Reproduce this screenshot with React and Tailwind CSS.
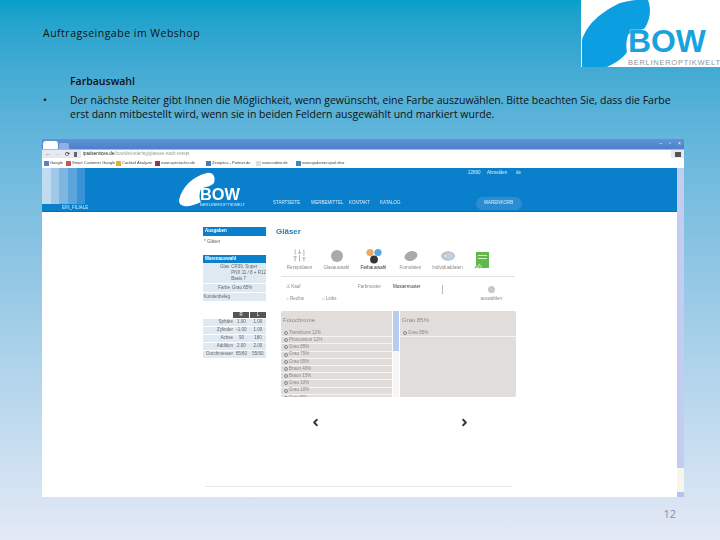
import { ChevronLeft, ChevronRight, SlidersVertical } from 'lucide-react';

const tabsTop = ['Rezeptdaten', 'Glasauswahl', 'Farbauswahl', 'Formdaten', 'Individualdaten'];
const bookmarks = [
  { label: 'Google', width: 'w-[22px]', color: 'bg-[#5a7fd0]' },
  { label: 'Smart Customer Google', width: 'w-[50px]', color: 'bg-[#c9555a]' },
  { label: 'Cocktail Analyzer', width: 'w-[39px]', color: 'bg-[#e0b030]' },
  { label: 'www.spectacles.de', width: 'w-[51px]', color: 'bg-[#8a3a5a]' },
  { label: 'Zeropticx - Partner.de', width: 'w-[50px]', color: 'bg-[#4a7ab0]' },
  { label: 'www.iodine.de', width: 'w-[40px]', color: 'bg-[#dddddd]' },
  { label: 'www.gadamer.opal.shor', width: 'w-[60px]', color: 'bg-[#3a8ac0]' },
];
const leftList = ['Transitions 12%', 'Photovision 12%', 'Grau 85%', 'Grau 75%', 'Grau 65%', 'Braun 40%', 'Braun 15%', 'Grau 10%', 'Grau 10%', 'Grau 5%'];
const lensRows = [
  ['Sphäre', '1.00', '1.00'],
  ['Zylinder', '-1.00', '1.00'],
  ['Achse', '90', '180'],
  ['Addition', '2.00', '2.00'],
  ['Durchmesser', '65/60', '55/60'],
];

function Logo() {
  return (
    <div className="w-[139px] h-[67px] bg-white shrink-0">
      <svg width="139" height="67" viewBox="0 0 139 67">
        <path d="M1 67L1 40C5 28 14 15 39 3C50 0 60-1 67 0C70 8 70 18 64 28C58 32 50 31 47 35C45 42 45 48 46 52C42 58 36 62 26 67Z" fill="#0b9fe2" />
        <text x="47" y="52" fontFamily="Liberation Sans" fontWeight="700" fontSize="31" fill="#1aa2df" stroke="#ffffff" strokeWidth="0.6" paintOrder="stroke" textLength="78" lengthAdjust="spacingAndGlyphs">BOW</text>
        <text x="47" y="65" fontFamily="Liberation Sans" fontSize="7.5" fill="#8f9498" textLength="92" lengthAdjust="spacing">BERLINEROPTIKWELT</text>
      </svg>
    </div>
  );
}

function ScreenLogo() {
  return (
    <svg width="67" height="36" viewBox="0 0 67 36" className="shrink-0">
      <path d="M0 28C3 15 14 4 28 1C34 0 37 5 35 11C32 15 24 15 22 17C20 22 20 27 22 30C16 33 9 35 5 34C1 33 0 31 0 28Z" fill="#ffffff" />
      <text x="21" y="28" fontFamily="Liberation Sans" fontWeight="700" fontSize="16" fill="#ffffff" textLength="40" lengthAdjust="spacingAndGlyphs">BOW</text>
      <text x="21" y="34" fontFamily="Liberation Sans" fontSize="4" fill="#d8ecf8" textLength="45" lengthAdjust="spacingAndGlyphs">BERLINEROPTIKWELT</text>
    </svg>
  );
}

function BrowserChrome() {
  return (
    <div className="shrink-0">
      <div className="h-[10px] bg-linear-to-b from-[#5f94d8] to-[#4f7fcb] flex items-end pl-[1px] pr-[3px]">
        <div className="w-[15px] h-[8px] bg-white rounded-t-[3px]" />
        <div className="w-[10px] h-[6px] bg-[#8fb0e2] rounded-t-[2px] ml-[1px]" />
        <div className="ml-auto flex gap-[7px] self-start pt-[2px] text-[5px] leading-[5px] text-white">
          <span>–</span>
          <span>▫</span>
          <span>×</span>
        </div>
      </div>
      <div className="h-[9px] bg-[#e6e9f2] border-t border-[#aeb8cf] flex items-center px-[3px] gap-[4px] text-[#555]">
        <span className="text-[6px] leading-none font-bold">←</span>
        <span className="text-[6px] leading-none text-[#aaa]">→</span>
        <span className="text-[6px] leading-none font-bold">⟳</span>
        <span className="w-[3px] h-[5px] bg-[#666]" />
        <div className="flex-1 h-[8px] bg-white flex items-center px-[2px] text-[4.5px] leading-none whitespace-nowrap">
          <span className="text-[#222]">ipadservices.de</span>
          <span className="text-[#999]">/bow/de/ordering/glasses-nach-rezept</span>
        </div>
        <span className="w-[6px] h-[5px] bg-[#555]" />
      </div>
      <div className="h-[10px] bg-white flex items-center pl-[2px] text-[4px] leading-none text-[#444] whitespace-nowrap overflow-hidden">
        {bookmarks.map((b) => (
          <div key={b.label} className={`flex items-center gap-[1px] ${b.width}`}>
            <span className={`w-[5px] h-[5px] ${b.color}`} />
            <span>{b.label}</span>
          </div>
        ))}
      </div>
    </div>
  );
}

function SiteHeader() {
  return (
    <div className="h-[44px] bg-[#0a80cc] flex border-b border-[#0a6fae] text-[#d8ecf8] text-[4.5px] leading-none whitespace-nowrap">
      <div className="w-[137px] flex flex-col shrink-0">
        <div className="h-[36px] flex">
          <div className="w-[9px] bg-[#c1dcf0]" />
          <div className="w-[8px] bg-[#9fc9e9]" />
          <div className="w-[9px] bg-[#7db6e1]" />
          <div className="w-[9px] bg-[#5ca4dc]" />
          <div className="w-[8px] bg-[#3a93d6]" />
        </div>
        <div className="pl-[20px] pt-[2px]">EIN_FILIALE</div>
      </div>
      <div className="pt-[4px] shrink-0">
        <ScreenLogo />
      </div>
      <div className="flex-1 flex flex-col pl-[27px]">
        <div className="flex pt-[3px] pl-[195px]">
          <span className="w-[19px]">22890</span>
          <span className="w-[29px]">Abmelden</span>
          <span>de</span>
        </div>
        <div className="flex items-center mt-[21px]">
          <span className="w-[38px]">STARTSEITE</span>
          <span className="w-[38px]">WERBEMITTEL</span>
          <span className="w-[31px]">KONTAKT</span>
          <span>KATALOG</span>
          <span className="ml-[75px] w-[46px] h-[13px] rounded-full bg-[#2a8cd2] flex items-center justify-center">WARENKORB</span>
        </div>
      </div>
    </div>
  );
}

function Sidebar() {
  return (
    <div className="w-[63px] shrink-0 text-[4.5px] leading-none text-[#666] pt-[15px]">
      <div className="h-[9px] bg-[#0a80cc] text-white font-bold flex items-center pl-[2px]">Ausgaben</div>
      <div className="mt-[4px] pl-[1px] h-[6px]">* Gläser</div>
      <div className="mt-[9px] h-[8px] bg-[#0a80cc] text-white font-bold flex items-center pl-[2px]">Warenauswahl</div>
      <div className="flex flex-col gap-[1px] bg-white">
        <div className="flex bg-[#dfe9f2] whitespace-nowrap">
          <span className="w-[27px] text-right pt-[2px]">Glas</span>
          <span className="pl-[2px] py-[1px] leading-[6px]">CR39, Super<br />PNX 11 / 8 + R12<br />Basis 7</span>
        </div>
        <div className="flex bg-[#dfe9f2] h-[8px] items-center">
          <span className="w-[27px] text-right">Farbe</span>
          <span className="pl-[2px]">Grau 85%</span>
        </div>
        <div className="flex bg-[#dfe9f2] h-[8px] items-center">
          <span className="w-[27px] text-right">Kundenbeleg</span>
        </div>
      </div>
      <div className="flex mt-[11px] gap-[1px] pl-[30px]">
        <span className="w-[16px] h-[6px] bg-[#555] text-white flex items-center justify-center">R</span>
        <span className="w-[16px] h-[6px] bg-[#555] text-white flex items-center justify-center">L</span>
      </div>
      <div className="flex flex-col gap-[1px] mt-[1px]">
        {lensRows.map((r) => (
          <div key={r[0]} className="flex bg-[#dfe9f2] h-[7px] items-center">
            <span className="w-[30px] text-right">{r[0]}</span>
            <span className="w-[17px] text-center">{r[1]}</span>
            <span className="w-[16px] text-center">{r[2]}</span>
          </div>
        ))}
      </div>
    </div>
  );
}

function TabIcon({ index }) {
  if (index === 0) return <SlidersVertical size={15} strokeWidth={1} color="#888888" />;
  if (index === 1) return <div className="w-[12px] h-[12px] rounded-full bg-[#a9a9a9]" />;
  if (index === 2) {
    return (
      <svg width="18" height="16" viewBox="0 0 18 16">
        <circle cx="5" cy="4.5" r="3.6" fill="#eda95c" />
        <circle cx="13" cy="4.5" r="3.6" fill="#55a8e2" />
        <circle cx="9" cy="11.5" r="3.9" fill="#333333" />
      </svg>
    );
  }
  if (index === 3) {
    return (
      <svg width="14" height="12" viewBox="0 0 14 12">
        <ellipse cx="7" cy="6" rx="6.6" ry="4.8" transform="rotate(-20 7 6)" fill="#a9a9a9" />
      </svg>
    );
  }
  return (
    <svg width="14" height="10" viewBox="0 0 14 10">
      <ellipse cx="7" cy="5" rx="6.5" ry="4.2" fill="#c5d2de" stroke="#9aa5b0" strokeWidth="0.7" />
      <circle cx="5" cy="5" r="2" fill="#d9e4ec" stroke="#9aa5b0" strokeWidth="0.5" />
    </svg>
  );
}

function OrderIcon() {
  return (
    <svg width="15" height="18" viewBox="0 0 15 18" className="mt-[5px] ml-[8px] shrink-0">
      <rect x="2" y="0" width="13" height="16" fill="#62b84a" />
      <rect x="4" y="3" width="9" height="1" fill="#d5ecc9" />
      <rect x="4" y="6" width="9" height="1" fill="#d5ecc9" />
      <path d="M0 17L1 14L5 14L5 12L8 14.5L5 17L5 16L2 16Z" fill="#7ec964" stroke="#ffffff" strokeWidth="0.4" />
    </svg>
  );
}

function MainPanel() {
  return (
    <div className="w-[245px] shrink-0 ml-[10px] pt-[15px] text-[4.5px] leading-none text-[#888]">
      <div className="text-[8px] leading-[10px] font-bold text-[#2b7fb0]">Gläser</div>
      <div className="flex mt-[10px] ml-[5px] h-[30px] border-b border-[#e2e2e2] w-[234px]">
        {tabsTop.map((t, i) => (
          <div key={t} className={`flex flex-col items-center w-[37px] ${i === 2 ? 'text-[#333]' : ''}`}>
            <div className="h-[17px] flex items-center justify-center">
              <TabIcon index={i} />
            </div>
            <span className="mt-[2px] whitespace-nowrap">{t}</span>
          </div>
        ))}
        <OrderIcon />
      </div>
      <div className="flex ml-[5px] pl-[5px] pt-[8px] h-[32px]">
        <div className="w-[72px]">
          <div>☉ Kauf</div>
          <div className="flex mt-[7px]">
            <span className="w-[36px]">○ Rechts</span>
            <span>○ Links</span>
          </div>
        </div>
        <div className="flex h-[10px]">
          <span className="w-[35px]">Farbmuster</span>
          <span className="text-[#333]">Mustermuster</span>
          <span className="ml-[21px] w-px h-[9px] bg-[#bbb]" />
        </div>
        <div className="ml-[38px] flex flex-col items-center pt-[1px]">
          <span className="w-[7px] h-[7px] rounded-full bg-[#c6c8ca]" />
          <span className="mt-[4px]">auswählen</span>
        </div>
      </div>
      <div className="flex ml-[5px] mt-[2px] h-[86px] text-[#8a8a8a]">
        <div className="w-[111px] bg-[#e0dddb] rounded-l-[2px] overflow-hidden">
          <div className="text-[6px] leading-none pl-[2px] pt-[6px] pb-[7px]">Fotochrome</div>
          {leftList.map((l) => (
            <div key={l} className="h-[7.2px] border-b border-[#f5f4f2] pl-[3px] flex items-center gap-[1px] whitespace-nowrap">
              <span className="w-[4px] h-[4px] rounded-full border-[0.5px] border-[#888] shrink-0" />
              {l}
            </div>
          ))}
        </div>
        <div className="w-[6px] mx-px bg-[#f6f6f6] flex flex-col">
          <div className="h-[40px] bg-[#b6cdf0]" />
        </div>
        <div className="w-[116px] bg-[#e0dddb] rounded-r-[2px]">
          <div className="text-[6px] leading-none pl-[2px] pt-[6px] pb-[7px]">Grau 85%</div>
          <div className="h-[7.2px] border-b border-[#f5f4f2] pl-[3px] flex items-center gap-[1px]">
            <span className="w-[4px] h-[4px] rounded-full border-[0.5px] border-[#888]" />
            Grau 85%
          </div>
        </div>
      </div>
      <div className="flex ml-[34px] mt-[20px] w-[160px] justify-between text-[#333]">
        <ChevronLeft size={11} strokeWidth={4} />
        <ChevronRight size={11} strokeWidth={4} />
      </div>
    </div>
  );
}

function Screenshot() {
  return (
    <div className="ml-[42px] mt-[20px] w-[642px] h-[358px] flex flex-col bg-white shrink-0 blur-[0.4px] font-['Liberation_Sans',sans-serif]">
      <BrowserChrome />
      <div className="flex flex-1 min-h-0">
        <div className="flex-1 flex flex-col min-w-0">
          <SiteHeader />
          <div className="flex-1 pl-[161px] flex min-h-0">
            <Sidebar />
            <MainPanel />
          </div>
          <div className="ml-[163px] w-[307px] h-[11px] border-t border-[#e8e8e8]" />
        </div>
        <div className="w-[7px] bg-[#f7f7e8] flex flex-col">
          <div className="h-[300px] bg-[#c3cdf2]" />
          <div className="h-[5px] mt-auto bg-[#b6c2ee]" />
        </div>
      </div>
    </div>
  );
}

export default function App() {
  return (
    <div className="w-[720px] h-[540px] overflow-hidden flex flex-col bg-linear-to-b from-[#02a0cb] via-[#62b5db] via-25% to-[#e4e9f6] font-['Open_Sans',sans-serif] text-[#111]">
      <div className="flex h-[67px] shrink-0 justify-between pl-[43px]">
        <div className="text-[10.5px] leading-[14px] pt-[26px] tracking-[0.5px]">Auftragseingabe im Webshop</div>
        <Logo />
      </div>
      <div className="flex pl-[43px] mt-[6px] h-[46px] shrink-0 text-[10.5px]">
        <div className="w-[27px] pt-[19px] leading-[16px]">•</div>
        <div className="w-[610px]">
          <div className="font-semibold leading-[16px] mb-[4px]">Farbauswahl</div>
          <div className="leading-[14px]">
            Der nächste Reiter gibt Ihnen die Möglichkeit, wenn gewünscht, eine Farbe auszuwählen. Bitte beachten Sie, dass die Farbe erst dann mitbestellt wird, wenn sie in beiden Feldern ausgewählt und markiert wurde.
          </div>
        </div>
      </div>
      <Screenshot />
      <div className="w-[676px] text-right text-[11px] leading-[14px] text-[#8a8f9c] mt-[10px]">12</div>
    </div>
  );
}
